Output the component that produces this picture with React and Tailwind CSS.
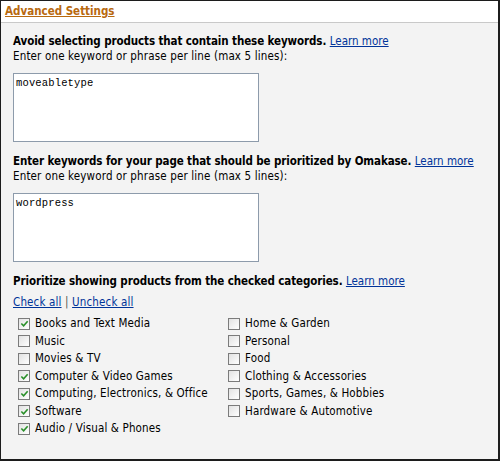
import React from 'react';

const font = { fontFamily: '"DejaVu Sans Condensed", "DejaVu Sans", sans-serif' };

const left = [
    { name: 'Books and Text Media', checked: true },
    { name: 'Music', checked: false },
    { name: 'Movies & TV', checked: false },
    { name: 'Computer & Video Games', checked: true },
    { name: 'Computing, Electronics, & Office', checked: true },
    { name: 'Software', checked: true },
    { name: 'Audio / Visual & Phones', checked: true },
];

const right = [
    { name: 'Home & Garden', checked: false },
    { name: 'Personal', checked: false },
    { name: 'Food', checked: false },
    { name: 'Clothing & Accessories', checked: false },
    { name: 'Sports, Games, & Hobbies', checked: false },
    { name: 'Hardware & Automotive', checked: false },
];

function Box({ checked }) {
    return (
        <span className="flex h-[12px] w-[12px] shrink-0 items-center justify-center border border-[#7b7b7b] bg-gradient-to-br from-[#e2e2e2] to-white">
            {checked && (
                <svg viewBox="0 0 10 10" className="h-[9px] w-[9px]">
                    <path d="M1.5 5 L4 7.5 L8.5 2.5" fill="none" stroke="#2a902a" strokeWidth="1.8" />
                </svg>
            )}
        </span>
    );
}

function Item({ item }) {
    return (
        <label className="flex h-[17.5px] items-center gap-[5px]">
            <Box checked={item.checked} />
            <span>{item.name}</span>
        </label>
    );
}

function LearnMore() {
    return <a href="#" className="font-normal tracking-normal text-[#003399] underline">Learn more</a>;
}

function KeywordBox({ value }) {
    return (
        <div className="mt-[10px] h-[69px] w-[246px] border border-[#8d9bab] bg-white px-[2px] pt-[3px] text-[10.5px] leading-[13px] text-black" style={{ fontFamily: '"Liberation Mono", monospace' }}>
            {value}
        </div>
    );
}

export default function App() {
    return (
        <div className="h-[461px] w-[500px] overflow-hidden border-t border-l border-r-2 border-b-2 border-[#1c1c1c] bg-[#f3f3f3] text-[11.5px] leading-[13px] tracking-[0.15px] text-black" style={font}>
            <div className="h-[22px] border-b border-[#c9c9c9] bg-white px-[4px] pt-[4px]">
                <a href="#" className="font-bold tracking-normal text-[#b8690f] underline">Advanced Settings</a>
            </div>
            <div className="px-[12px] pt-[12px]">
                <p><span className="font-bold tracking-[-0.1px]">Avoid selecting products that contain these keywords.</span> <LearnMore /></p>
                <p className="mt-[2px]">Enter one keyword or phrase per line (max 5 lines):</p>
                <KeywordBox value="moveabletype" />

                <p className="mt-[13px]"><span className="font-bold tracking-[-0.1px]">Enter keywords for your page that should be prioritized by Omakase.</span> <LearnMore /></p>
                <p className="mt-[2px]">Enter one keyword or phrase per line (max 5 lines):</p>
                <KeywordBox value="wordpress" />

                <p className="mt-[13px]"><span className="font-bold tracking-[-0.1px]">Prioritize showing products from the checked categories.</span> <LearnMore /></p>
                <p className="mt-[8px]">
                    <a href="#" className="text-[#003399] underline">Check all</a>
                    <span className="text-[#555]"> | </span>
                    <a href="#" className="text-[#003399] underline">Uncheck all</a>
                </p>
                <div className="mt-[6px] grid grid-cols-[210px_1fr] pl-[5px]">
                    <div>
                        {left.map((item) => <Item key={item.name} item={item} />)}
                    </div>
                    <div>
                        {right.map((item) => <Item key={item.name} item={item} />)}
                    </div>
                </div>
            </div>
        </div>
    );
}
